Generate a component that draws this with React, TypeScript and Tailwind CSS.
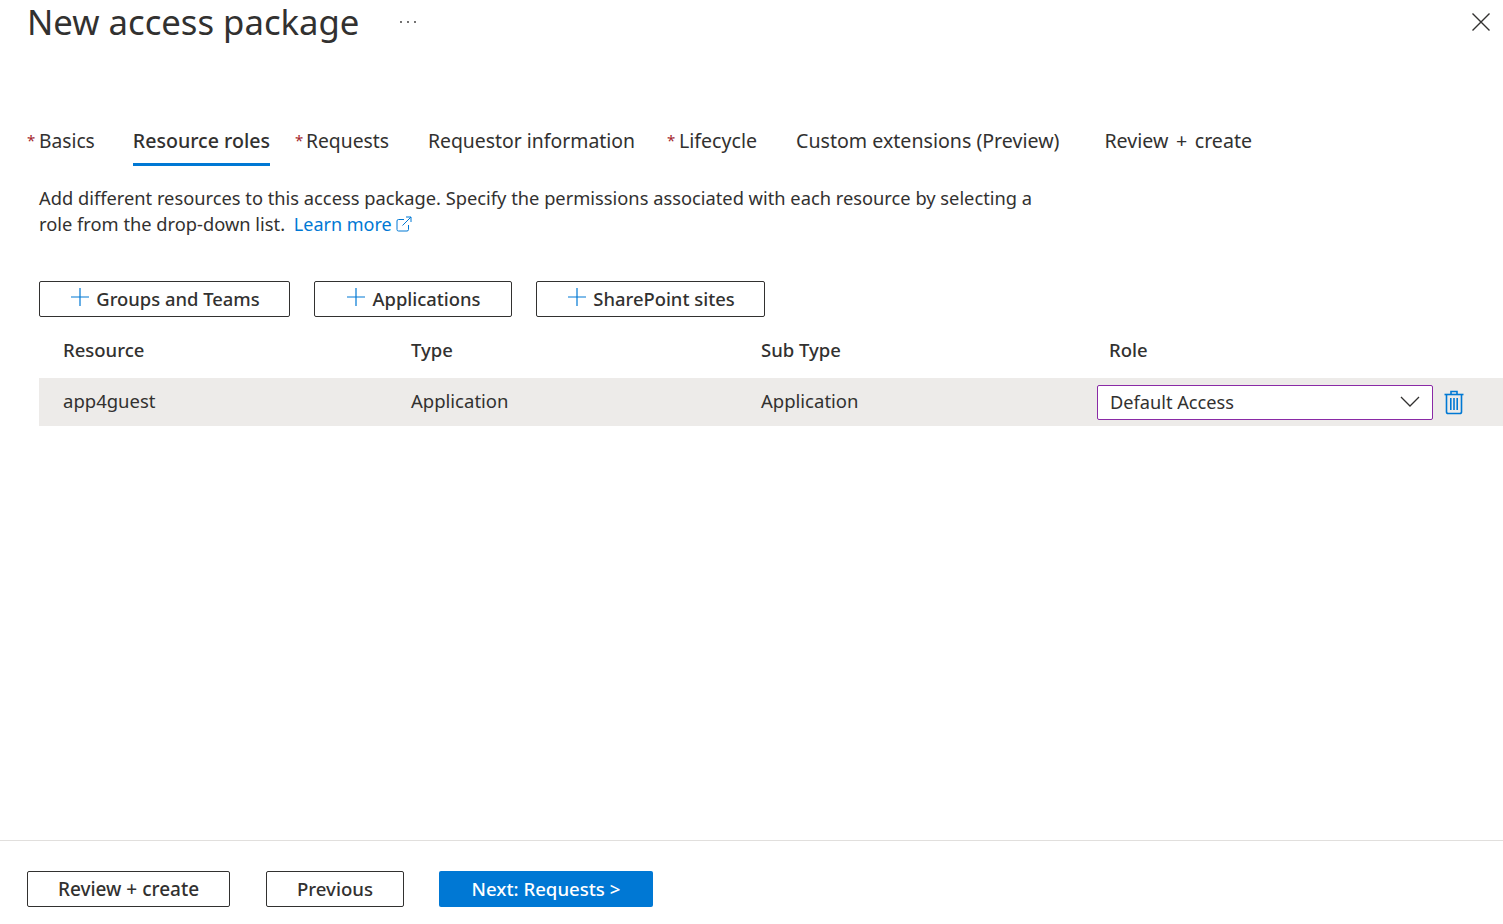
const tabs = [
  { label: "Basics", required: true, gap: "mr-[38px]", text: "text-[19.2px]", star: "w-[12px]" },
  { label: "Resource roles", active: true, gap: "mr-[25px]", text: "text-[19.6px]" },
  { label: "Requests", required: true, gap: "mr-[39px]", text: "text-[19.3px]", star: "w-[11px]" },
  { label: "Requestor information", gap: "mr-[32px]", text: "text-[19.4px]" },
  { label: "Lifecycle", required: true, gap: "mr-[39px]", text: "text-[19.6px]", star: "w-[12px]" },
  { label: "Custom extensions (Preview)", gap: "mr-[45px]", text: "text-[19.6px]" },
  { label: "Review + create", gap: "", text: "text-[19.6px] [word-spacing:2.5px]" },
];

const addButtons = [
  { label: "Groups and Teams", width: "w-[251px]" },
  { label: "Applications", width: "w-[198px]" },
  { label: "SharePoint sites", width: "w-[229px]" },
];

function PlusIcon() {
  return (
    <svg width="18" height="18" viewBox="0 0 18 18" fill="none" stroke="#0078d4" strokeWidth="1.2" className="-mt-[4px]">
      <path d="M9 0v18M0 9h18" />
    </svg>
  );
}

function TrashIcon() {
  return (
    <svg width="22" height="26" viewBox="0 0 22 26" fill="none" stroke="#0078d4" strokeWidth="1.6">
      <path d="M1.5 5.5h19" />
      <path d="M8 5V2.5h6V5" />
      <path d="M3.5 5.5v17.2c0 1 .7 1.8 1.7 1.8h11.6c1 0 1.7-.8 1.7-1.8V5.5" />
      <path d="M7.8 9v12M11 9v12M14.2 9v12" />
    </svg>
  );
}

export default function App() {
  return (
    <div className="h-[924px] w-[1503px] overflow-hidden flex flex-col bg-white text-[#323130] font-['Noto_Sans',sans-serif]">
      {/* Header */}
      <div className="h-[44px] flex items-center pl-[27px] pr-[12px]">
        <h1 className="text-[34.7px] leading-[44px] font-normal">New access package</h1>
        <svg width="18" height="4" viewBox="0 0 18 4" fill="#323130" className="ml-[40px] -mt-[1px]">
          <circle cx="2" cy="2" r="0.9" />
          <circle cx="9" cy="2" r="0.9" />
          <circle cx="16" cy="2" r="0.9" />
        </svg>
        <svg width="20" height="20" viewBox="0 0 20 20" fill="none" stroke="#323130" strokeWidth="1.4" className="ml-auto">
          <path d="M1.5 1.5l17 17M18.5 1.5l-17 17" />
        </svg>
      </div>

      {/* Tabs */}
      <div className="mt-[84px] pl-[27px] flex items-start">
        {tabs.map((tab) => (
          <div key={tab.label} className={`flex h-[38px] ${tab.gap}`}>
            {tab.required && <span className={`text-[#a4262c] text-[15px] leading-[24px] ${tab.star}`}>*</span>}
            <span
              className={
                tab.active
                  ? `${tab.text} leading-[26px] font-medium border-b-[3px] border-[#0078d4] h-[38px]`
                  : `${tab.text} leading-[26px]`
              }
            >
              {tab.label}
            </span>
          </div>
        ))}
      </div>

      {/* Description */}
      <p className="mt-[19px] pl-[39px] w-[1040px] text-[18.3px] leading-[26px]">
        Add different resources to this access package. Specify the permissions associated with each resource by selecting a role from the drop-down list.{" "}
        <span className="text-[#0078d4] ml-[4px] text-[18px]">Learn more</span>
        <svg width="16" height="16" viewBox="0 0 16 16" fill="none" stroke="#0078d4" strokeWidth="1" className="inline-block ml-[4px] -mt-[5px]">
          <path d="M8 3.5H2.5a1.5 1.5 0 0 0-1.5 1.5v8.5A1.5 1.5 0 0 0 2.5 15H11a1.5 1.5 0 0 0 1.5-1.5V9" />
          <path d="M6.5 9.5L15 1M10 1h5v5" />
        </svg>
      </p>

      {/* Add buttons */}
      <div className="mt-[44px] pl-[39px] flex gap-[24px]">
        {addButtons.map((btn) => (
          <div key={btn.label} className={`${btn.width} h-[36px] border border-[#323130] rounded-[2px] flex items-center justify-center gap-[7px] pl-[2px] text-[18.4px] font-medium`}>
            <PlusIcon />
            {btn.label}
          </div>
        ))}
      </div>

      {/* Table */}
      <div className="pl-[39px]">
        <div className="h-[61px] flex items-center pl-[24px] pt-[4px] text-[18.5px] font-medium">
          <div className="w-[348px]">Resource</div>
          <div className="w-[350px]">Type</div>
          <div className="w-[348px]">Sub Type</div>
          <div>Role</div>
        </div>
        <div className="h-[48px] flex items-center pl-[24px] bg-[#edebe9] text-[18.5px]">
          <div className="w-[348px] -mt-[2px]">app4guest</div>
          <div className="w-[350px] -mt-[2px]">Application</div>
          <div className="w-[336px] -mt-[2px]">Application</div>
          <div className="w-[336px] h-[35px] bg-white border border-[#8a2aa6] rounded-[2px] flex items-center justify-between pl-[12px] pr-[12px] text-[18.2px]">
            <span className="pt-[1px]">Default Access</span>
            <svg width="20" height="12" viewBox="0 0 20 12" fill="none" stroke="#323130" strokeWidth="1.3"><path d="M1 1l9 9 9-9" /></svg>
          </div>
          <div className="ml-[10px]"><TrashIcon /></div>
        </div>
      </div>

      {/* Footer */}
      <div className="mt-auto h-[84px] border-t border-[#e1dfdd] pt-[30px] pl-[27px] flex text-[18.6px] font-medium">
        <div className="w-[203px] h-[36px] border border-[#323130] rounded-[2px] flex items-center justify-center text-[19px]">Review + create</div>
        <div className="ml-[36px] w-[138px] h-[36px] border border-[#323130] rounded-[2px] flex items-center justify-center">Previous</div>
        <div className="ml-[35px] w-[214px] h-[36px] bg-[#0078d4] text-white rounded-[2px] flex items-center justify-center">{"Next: Requests >"}</div>
      </div>
    </div>
  );
}
